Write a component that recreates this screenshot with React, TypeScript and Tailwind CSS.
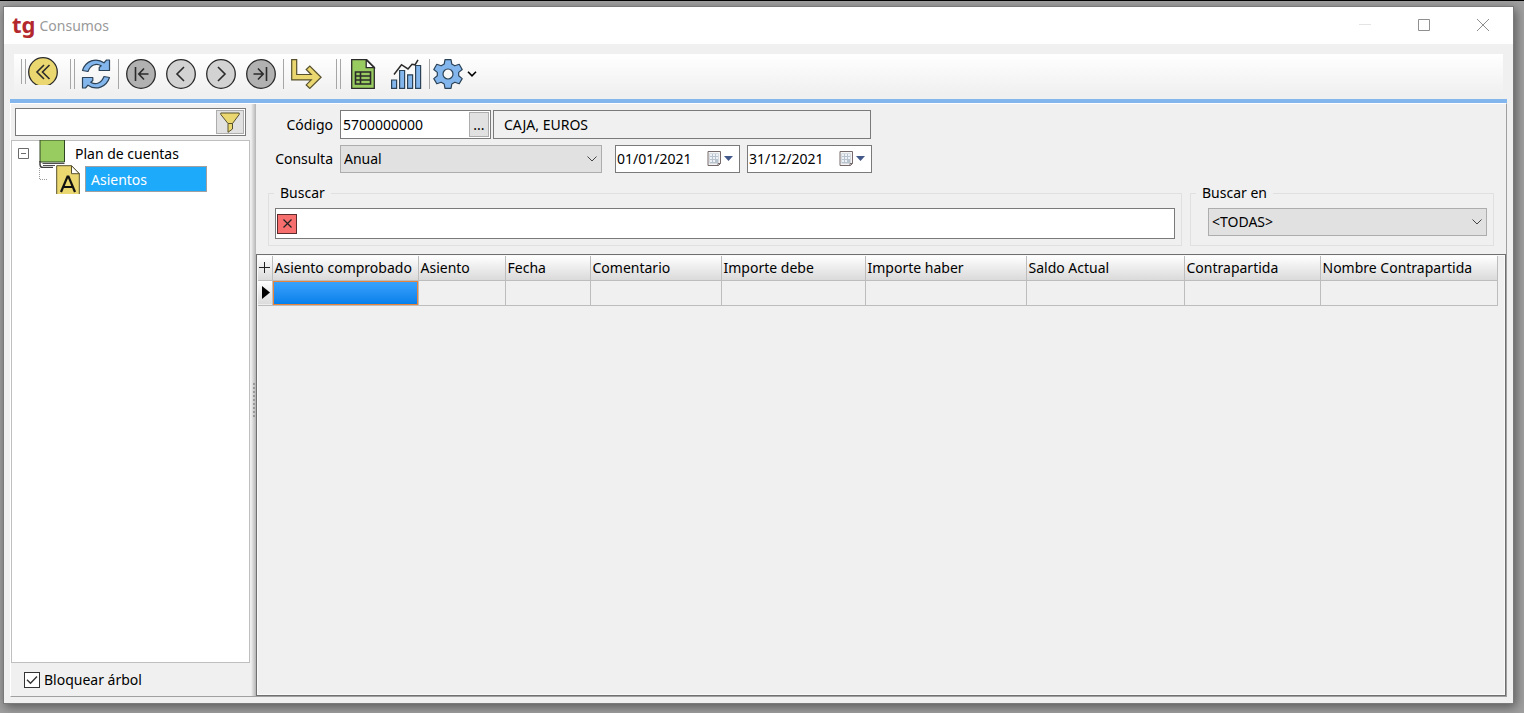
import { useState } from 'react'
import type { ReactNode } from 'react'

const columns = [
    { title: 'Asiento comprobado', width: 'w-[146px]' },
    { title: 'Asiento', width: 'w-[87px]' },
    { title: 'Fecha', width: 'w-[85px]' },
    { title: 'Comentario', width: 'w-[131px]' },
    { title: 'Importe debe', width: 'w-[144px]' },
    { title: 'Importe haber', width: 'w-[161px]' },
    { title: 'Saldo Actual', width: 'w-[158px]' },
    { title: 'Contrapartida', width: 'w-[136px]' },
    { title: 'Nombre Contrapartida', width: 'w-[177px]' },
]

export default function App() {
    return (
        <div className="flex h-screen flex-col border-t border-black bg-[#a0a0a0] pt-[5px] pr-[10px] pb-[9px] pl-[3px] font-['Noto_Sans','Open_Sans',sans-serif] text-sm leading-5 text-black">
            <div className="flex min-h-0 flex-1 flex-col border border-[#7a7a7a] bg-[#f0f0f0] shadow-[2px_3px_10px_rgba(0,0,0,0.45)]">
                <TitleBar />
                <Toolbar />
                <div className="mx-[6px] mt-[5px] h-1 shrink-0 bg-[#83b6ec]"></div>
                <div className="mx-[6px] mb-[6px] flex min-h-0 flex-1 border-t border-r border-b border-l border-t-white border-r-[#a0a0a0] border-b-[#a0a0a0] border-l-white">
                    <Sidebar />
                    <Splitter />
                    <main className="flex min-w-0 flex-1 flex-col">
                        <Filters />
                        <EntriesGrid />
                    </main>
                </div>
            </div>
        </div>
    )
}

const TitleBar = () => {
    return (
        <header className="flex h-[37px] shrink-0 items-center bg-white pl-2 text-[#999]">
            <span className="mr-1 h-9 text-[22px] leading-8 font-bold text-[#b3282d]">tg</span>
            <h1>Consumos</h1>
            <div className="ml-auto flex h-9 self-start">
                <button aria-label="Minimizar" className="flex w-[59px] items-center justify-center">
                    <svg width="12" height="12" stroke="#e4e4e4" shapeRendering="crispEdges"><path d="M0 5.5h12" /></svg>
                </button>
                <button aria-label="Maximizar" className="flex w-[59px] items-center justify-center">
                    <svg width="12" height="12" fill="none" stroke="#8f8f8f"><path d="M.5.5h11v11H.5z" /></svg>
                </button>
                <button aria-label="Cerrar" className="flex w-[60px] items-center justify-center">
                    <svg width="12" height="12" stroke="#8f8f8f"><path d="M0 0l12 12M12 0L0 12" /></svg>
                </button>
            </div>
        </header>
    )
}

const Grip = () => <div className="h-[30px] w-[5px] border-x border-[#a6a6a6]"></div>
const Line = () => <div className="h-[30px] w-px bg-[#a6a6a6]"></div>

const ToolButton = ({ label, children }: { label: string; children: ReactNode }) => (
    <button aria-label={label} className="h-[30px] w-[30px]">{children}</button>
)

const Round = ({ fill, d }: { fill: string; d: string }) => (
    <svg width="30" height="30" fill="none" stroke="#2b2b2b">
        <circle cx="15" cy="15" r="14.3" fill={fill} strokeWidth="1.3" />
        <path d={d} strokeWidth="1.6" />
    </svg>
)

const Toolbar = () => {
    return (
        <div className="mr-[10px] ml-[10px] mt-[10px] flex h-10 shrink-0 items-center bg-gradient-to-b from-white to-[#f0f0f0] pl-[7px]">
            <div className="flex h-[30px] items-start gap-[2px]">
                <div className="h-[25px] w-[5px] border-x border-[#a6a6a6]"></div>
                <button aria-label="Volver" className="-mt-[2px] h-[28px] w-[30px] overflow-hidden">
                    <Round fill="#ead770" d="M16 8L9 15l7 7M21.500 8l-7 7 7 7" />
                </button>
            </div>
            <div className="ml-3 flex gap-[6px]">
                <Grip />
                <ToolButton label="Actualizar">
                    <svg width="30" height="30" fill="#83b6ec" stroke="#2b4257" strokeWidth="1.2" strokeLinejoin="round">
                        <path d="M1.500 11.500C4.500 2 15 -2 23 3.800L25.500 1h3v10.500H18.200V8.500l2-1.800C15 3.500 9.500 6 7 12.500z" />
                        <path d="M28.500 18.500C25.500 28 15 32 7 26.200L4.500 29h-3V18.500h10.300v3l-2 1.800c5.200 3.200 10.700.7 13.200-5.800z" />
                    </svg>
                </ToolButton>
            </div>
            <div className="ml-[7px] flex gap-[7px]">
                <Line />
                <div className="flex gap-[10px]">
                    <ToolButton label="Primero"><Round fill="#b1b1b1" d="M9.500 8v14M22.500 15h-9M18 9.500L12.800 15l5.200 5.500" /></ToolButton>
                    <ToolButton label="Anterior"><Round fill="#d2d2d2" d="M18 8L11 15l7 7" /></ToolButton>
                    <ToolButton label="Siguiente"><Round fill="#d2d2d2" d="M12 8l7 7-7 7" /></ToolButton>
                    <ToolButton label="Último"><Round fill="#b1b1b1" d="M20.500 8v14M7.500 15h9M12 9.500l5.200 5.500-5.200 5.500" /></ToolButton>
                </div>
                <Line />
                <ToolButton label="Ir a">
                    <svg width="31" height="30" fill="#ead770" stroke="#57502c" strokeWidth="1.2">
                        <path d="M.7.7h5v14.800h14.500l-5-5L18.800 7l11.300 11.200L18.800 29.400l-3.600-3.500 5-5H.7z" />
                    </svg>
                </ToolButton>
            </div>
            <div className="ml-[15px] flex gap-[7px]">
                <Grip />
                <ToolButton label="Hoja de cálculo">
                    <svg width="30" height="30" stroke="#2b2b2b" strokeWidth="1.3">
                        <path d="M3.700.7h15l7.600 7.600v21H3.700z" fill="#98cb60" />
                        <path d="M18.200.7v8h8z" fill="#fff" />
                        <path d="M7.500 13h15v12h-15zM7.500 17h15M7.500 21h15M12.500 13v12" fill="none" strokeWidth="1.6" />
                    </svg>
                </ToolButton>
            </div>
            <div className="ml-[13px] flex gap-2">
                <ToolButton label="Gráfico">
                    <svg width="31" height="30" fill="#83b6ec" stroke="#2b4257" strokeWidth="1.200">
                        <path d="M.6 21h5v8.400h-5zM8.600 11.500h5v17.900h-5zM16.600 15.800h5v13.600h-5zM24.600 6.500h5v22.900h-5z" />
                        <path d="M3 15.500l7.500-9.800 6.500 4.200 4-4.700 3 .6L27 .8" fill="none" stroke="#2b2b2b" strokeWidth="1.500" />
                    </svg>
                </ToolButton>
                <Line />
            </div>
            <button aria-label="Configuración" className="ml-[3px] flex items-center gap-1">
                <svg width="30" height="30" fill="#83b6ec" stroke="#2b4257" strokeWidth="1.200" strokeLinejoin="round">
                    <path fillRule="evenodd" d="M12 .7h6l.8 4.400 3 1.700 4.400-1.500 3 5.200-3.500 2.900v3.300l3.500 2.900-3 5.200-4.400-1.500-3 1.700-.8 4.400h-6l-.8-4.400-3-1.700-4.400 1.500-3-5.200 3.500-2.900v-3.300L.8 10.500l3-5.200 4.400 1.500 3-1.700zM15 10a5 5 0 1 0 0 10a5 5 0 1 0 0-10z" />
                </svg>
                <svg width="10" height="6" fill="none" stroke="#000" strokeWidth="1.600"><path d="M1 .8l4 4 4-4" /></svg>
            </button>
        </div>
    )
}

const Sidebar = () => {
    const [locked, setLocked] = useState(true)

    return (
        <aside className="flex w-[240px] shrink-0 flex-col pr-px">
            <div className="mx-1 mt-1 flex h-[28px] border border-[#7a7a7a] bg-white">
                <input type="text" aria-label="Filtrar cuentas" className="min-w-0 flex-1 px-1 outline-none" />
                <button aria-label="Filtrar" className="m-px flex w-[28px] items-center justify-center border border-[#adadad] bg-[#e1e1e1]">
                    <svg width="20" height="21" fill="#ead770" stroke="#57502c">
                        <path d="M.8 1h18.400v1.500L12.500 11.500v5.500L8 20.300v-8.800L.8 2.500z" />
                        <path d="M8 11.500h4.500" />
                    </svg>
                </button>
            </div>
            <div className="mt-1 min-h-0 flex-1 border border-[#bfbfbf] bg-white pl-[6px]">
                <div className="flex h-[25px] items-center">
                    <button aria-label="Contraer">
                        <svg width="11" height="11" fill="none" stroke="#6b6b6b"><path d="M.5.5h10v10H.5zM3 5.500h5" /></svg>
                    </button>
                    <svg className="ml-[10px] shrink-0" width="26" height="28" stroke="#2f4420">
                        <path d="M1 0h24.500v22H1z" fill="#98cb60" />
                        <path d="M1 21v3.500q0 3 3 3H14" fill="none" stroke="#3f3f3f" strokeWidth="1.500" />
                        <path d="M3.500 23.500h22M4 25.500h12" fill="none" stroke="#4f4f4f" />
                    </svg>
                    <span className="ml-[10px]">Plan de cuentas</span>
                </div>
                <div className="flex h-[26px] items-center pl-[21px]">
                    <svg className="shrink-0" width="17" height="26" fill="none" stroke="#9a9a9a" strokeDasharray="1 1"><path d="M.5 2v11.500H8" /></svg>
                    <svg className="shrink-0" width="24" height="29" stroke="#57502c">
                        <path d="M.7 29V.7h14.800l7.800 8V29" fill="#ead770" />
                        <path d="M15.500.7v8h7.800z" fill="#fff" />
                        <path d="M5 27L11.500 11.500h1L19 27M7.500 22h9" fill="none" stroke="#111" strokeWidth="2.200" />
                    </svg>
                    <span className="ml-[5px] h-[26px] w-[122px] border border-[#a0a0a0] bg-[#1eaafa] pl-[5px] leading-[26px] text-white">Asientos</span>
                </div>
            </div>
            <label className="flex h-[33px] shrink-0 items-center gap-1 pl-[13px]">
                <span className="grid h-4 w-4 place-items-center">
                    <input
                        type="checkbox"
                        checked={locked}
                        onChange={(e) => setLocked(e.target.checked)}
                        className="col-start-1 row-start-1 h-4 w-4 appearance-none border border-[#333] bg-white"
                    />
                    {locked && (
                        <svg className="pointer-events-none col-start-1 row-start-1" width="12" height="10" fill="none" stroke="#333" strokeWidth="1.400"><path d="M1 4.800l3.500 3.500L11 1.500" /></svg>
                    )}
                </span>
                Bloquear árbol
            </label>
        </aside>
    )
}

const Splitter = () => {
    return (
        <div className="flex w-[5px] shrink-0 flex-col items-center justify-center gap-[2px] bg-gradient-to-r from-[#f0f0f0] to-[#b4b4b4]">
            {Array.from({ length: 9 }, (_, i) => (
                <span key={i} className="h-[2px] w-[2px] bg-[#999]"></span>
            ))}
        </div>
    )
}

interface ComboProps {
    id: string;
    options: string[];
    className: string;
}

const Combo = ({ id, options, className }: ComboProps) => (
    <div className={`relative h-[28px] ${className}`}>
        <select id={id} className="h-full w-full appearance-none border border-[#adadad] bg-[#e1e1e1] pl-[3px]">
            {options.map((o) => (
                <option key={o}>{o}</option>
            ))}
        </select>
        <svg className="pointer-events-none absolute top-[11px] right-[5px]" width="10" height="6" fill="none" stroke="#444"><path d="M.5.500L5 5 9.500.5" /></svg>
    </div>
)

const DateBox = ({ label, initial }: { label: string; initial: string }) => {
    const [date, setDate] = useState(initial)

    return (
        <div className="flex h-[28px] w-[125px] border border-[#7a7a7a] bg-white">
            <input type="text" aria-label={label} value={date} onChange={(e) => setDate(e.target.value)} className="min-w-0 flex-1 pl-px outline-none" />
            <button aria-label="Abrir calendario" className="flex w-8 items-center gap-[2px]">
                <svg width="15" height="16">
                    <path d="M1 .5h12.500V12.500L11.500 14.500H1z" fill="#f4f4f4" stroke="#75696b" />
                    <path d="M2.500 2.500h9v10h-9z" fill="#b9c3ce" />
                    <path d="M3 3h2v2H3zM6 3h2v2H6zM9 3h2v2H9zM3 6h2v2H3zM6 6h2v2H6zM9 6h2v2H9zM3 9h2v2H3zM6 9h2v2H6z" fill="#eef1f5" />
                    <path d="M11 14.500v-2h2.500" fill="none" stroke="#75696b" />
                </svg>
                <svg width="9" height="6" fill="#42588a"><path d="M0 0h9L4.500 5z" /></svg>
            </button>
        </div>
    )
}

const Filters = () => {
    const [code, setCode] = useState('5700000000')
    const [search, setSearch] = useState('')

    return (
        <section className="shrink-0 pt-[6px]">
            <div className="flex items-center">
                <label htmlFor="codigo" className="mr-[7px] w-[77px] text-right">Código</label>
                <div className="flex h-[29px] w-[151px] border border-[#7a7a7a] bg-white">
                    <input id="codigo" type="text" value={code} onChange={(e) => setCode(e.target.value)} className="min-w-0 flex-1 pl-[2px] outline-none" />
                    <button aria-label="Elegir cuenta" className="m-px w-5 border border-[#adadad] bg-[#e1e1e1] leading-5">...</button>
                </div>
                <input type="text" aria-label="Nombre de la cuenta" readOnly value="CAJA, EUROS" className="ml-[2px] h-[29px] w-[378px] border border-[#7a7a7a] bg-[#f0f0f0] pl-[10px] outline-none" />
            </div>
            <div className="mt-[6px] flex items-center">
                <label htmlFor="consulta" className="mr-[7px] w-[77px] text-right">Consulta</label>
                <Combo id="consulta" options={['Anual', 'Mensual']} className="w-[262px]" />
                <div className="ml-[13px] flex gap-[7px]">
                    <DateBox label="Desde" initial="01/01/2021" />
                    <DateBox label="Hasta" initial="31/12/2021" />
                </div>
            </div>
            <div className="mt-[10px] mr-3 ml-3 flex gap-2">
                <fieldset className="h-[63px] min-w-0 flex-1 border border-[#e0e0e0] px-[6px] pt-[5px]">
                    <legend className="ml-[-1px] px-[6px]">Buscar</legend>
                    <div className="flex h-[31px] items-center border border-[#7a7a7a] bg-white pl-px">
                        <button aria-label="Borrar búsqueda" onClick={() => setSearch('')} className="flex h-5 w-5 items-center justify-center border border-[#5c2b2b] bg-[#f66e6e]">
                            <svg width="9" height="9" stroke="#222" strokeWidth="1.200"><path d="M.5.500l8 8M8.500.500l-8 8" /></svg>
                        </button>
                        <input type="text" aria-label="Buscar" value={search} onChange={(e) => setSearch(e.target.value)} className="min-w-0 flex-1 px-1 outline-none" />
                    </div>
                </fieldset>
                <fieldset className="h-[63px] w-[304px] border border-[#e0e0e0] pt-[5px] pr-[6px] pl-[17px]">
                    <legend className="ml-[-12px] px-[6px]"><label htmlFor="buscar-en">Buscar en</label></legend>
                    <Combo id="buscar-en" options={['<TODAS>']} className="w-full" />
                </fieldset>
            </div>
        </section>
    )
}

const EntriesGrid = () => {
    return (
        <div className="mt-2 min-h-0 flex-1 overflow-hidden border border-[#707070] bg-[#f0f0f0]">
            <div className="h-full overflow-hidden border border-[#fafafa]">
                <table className="w-[1239px] table-fixed border-collapse text-left">
                    <thead>
                        <tr className="h-6 bg-gradient-to-b from-white to-[#dadada]">
                            <th className="w-[14px] border-r border-b border-[#bdbdbd]">
                                <svg className="mx-auto" width="11" height="11" stroke="#222"><path d="M0 5.500h11M5.500 0v11" /></svg>
                            </th>
                            {columns.map((c) => (
                                <th key={c.title} className={`${c.width} border-r border-b border-[#bdbdbd] pl-[2px] font-normal whitespace-nowrap`}>{c.title}</th>
                            ))}
                        </tr>
                    </thead>
                    <tbody>
                        <tr className="h-[25px]">
                            <td className="border-r border-b border-[#bdbdbd] bg-gradient-to-b from-white to-[#dadada]">
                                <svg className="ml-1" width="8" height="13"><path d="M0 0l8 6.500L0 13z" /></svg>
                            </td>
                            {columns.map((c, i) => (
                                <td key={c.title} className="border-r border-b border-[#bdbdbd]">
                                    {i === 0 && <div className="h-6 border border-[#e8833a] bg-gradient-to-b from-[#37a2fd] to-[#0580ea]"></div>}
                                </td>
                            ))}
                        </tr>
                    </tbody>
                </table>
            </div>
        </div>
    )
}
